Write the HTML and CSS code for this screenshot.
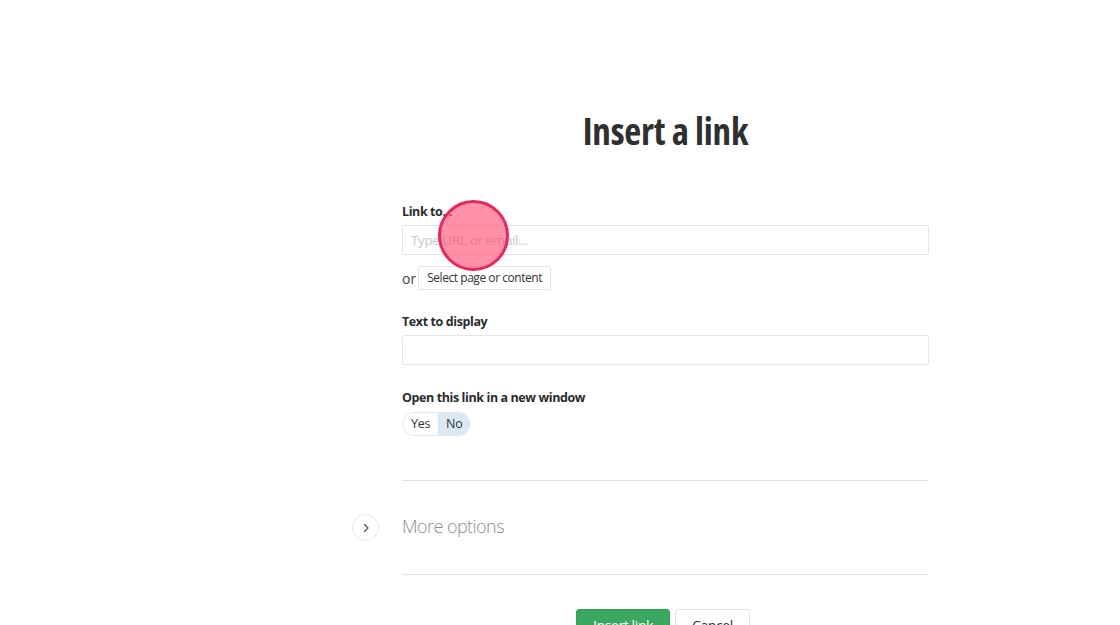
FILE: index.html
```html
<!DOCTYPE html>
<html>
<head>
<meta charset="utf-8">
<link rel="stylesheet" href="styles.css">
</head>
<body>
<div class="dialog">
  <h1 class="title">Insert a link</h1>
  <div class="field">
    <label class="label">Link to...</label>
    <div class="input placeholder">Type URL or email...</div>
    <div class="or-row"><span class="or">or</span><span class="btn-small">Select page or content</span></div>
  </div>
  <div class="field field-text">
    <label class="label">Text to display</label>
    <div class="input"></div>
  </div>
  <div class="field field-window">
    <label class="label">Open this link in a new window</label>
    <div class="toggle"><span class="opt">Yes</span><span class="opt active">No</span></div>
  </div>
  <div class="more">
    <span class="more-btn"><svg width="10" height="10" viewBox="0 0 10 10"><path d="M3.5 1.5 L7 5 L3.5 8.5" fill="none" stroke="#555" stroke-width="1.3" stroke-linecap="round" stroke-linejoin="round"/></svg></span>
    <span class="more-text">More options</span>
  </div>
  <div class="actions">
    <span class="btn btn-primary">Insert link</span>
    <span class="btn btn-default">Cancel</span>
  </div>
  <div class="click-dot"></div>
</div>
</body>
</html>
```
FILE: styles.css
```css
html, body { margin: 0; padding: 0; background: #fff; }
body { font-family: "Open Sans", "Liberation Sans", sans-serif; color: #333; overflow: hidden; height: 625px; }
.dialog { position: relative; width: 527px; margin-left: 402px; padding-top: 107px; }
.title { margin: 0; text-align: center; font-size: 37px; line-height: 48px; font-weight: 700; font-stretch: 75%; color: #2f2f2f; letter-spacing: -0.2px; }
.field { margin-top: 48px; }
.label { display: block; font-size: 12.5px; line-height: 18px; font-weight: 700; letter-spacing: -0.4px; color: #2b2b2b; margin-bottom: 4px; }
.input { box-sizing: border-box; height: 30px; border: 1px solid #e6e6e6; border-radius: 2px; padding: 0 8px; font-size: 13.5px; letter-spacing: -0.4px; line-height: 28px; }
.placeholder { color: #c8c8c8; }
.or-row { display: flex; align-items: center; margin-top: 11px; height: 24px; }
.or { font-size: 14px; color: #444; margin-right: 2px; }
.btn-small { box-sizing: border-box; height: 24px; border: 1px solid #e6e6e6; border-radius: 2px; padding: 0 8px; font-size: 12px; letter-spacing: -0.45px; line-height: 22px; color: #333; }
.field-text { margin-top: 23px; }
.field-window { margin-top: 24px; }
.toggle { display: inline-flex; height: 24px; border: 1px solid #e8e8e8; border-radius: 12px; overflow: hidden; box-sizing: border-box; }
.opt { font-size: 12.5px; letter-spacing: -0.3px; line-height: 22px; padding: 0 8px; color: #333; }
.active { background: #dbe9f3; }
.more { position: relative; margin-top: 44px; border-top: 1px solid #e3e3e3; border-bottom: 1px solid #e3e3e3; height: 95px; box-sizing: border-box; padding-bottom: 3px; display: flex; align-items: center; }
.more-text { font-size: 18px; font-weight: 300; letter-spacing: -0.55px; color: #8e8e8e; }
.more-btn { position: absolute; left: -50px; top: 33px; width: 27px; height: 27px; box-sizing: border-box; border: 1px solid #e8e8e8; border-radius: 50%; display: flex; align-items: center; justify-content: center; }
.actions { display: flex; justify-content: center; gap: 5px; margin-top: 34px; padding-right: 5px; }
.btn { box-sizing: border-box; height: 34px; border-radius: 3px; font-size: 14px; letter-spacing: -0.4px; line-height: 32px; padding: 0 16px; }
.btn-primary { background: #3aa75f; border: 1px solid #34a058; color: #fff; }
.btn-default { background: #fff; border: 1px solid #e3e3e3; color: #333; }
.click-dot { position: absolute; left: 36px; top: 200px; width: 71px; height: 71px; box-sizing: border-box; border-radius: 50%; border: 3px solid #e6285c; background: rgba(255, 70, 110, 0.6); }
```
